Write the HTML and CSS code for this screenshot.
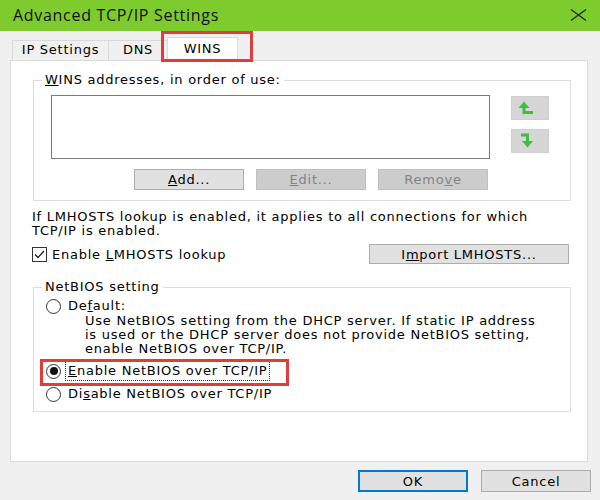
FILE: index.html
```html
<!DOCTYPE html>
<html lang="en">
<head>
    <meta charset="UTF-8">
    <title>Advanced TCP/IP Settings</title>
    <link rel="stylesheet" href="styles.css">
</head>
<body>
    <div class="window">
        <div class="titlebar">
            <span class="title">Advanced TCP/IP Settings</span>
            <svg class="close" width="17" height="12" viewBox="0 0 17 12">
                <path d="M1 0.5 L16 11.5 M16 0.5 L1 11.5" stroke="#1b2a10" stroke-width="1.3" fill="none"/>
            </svg>
        </div>

        <div class="tabs">
            <div class="tab tab-ip">IP Settings</div>
            <div class="tab tab-dns">DNS</div>
            <div class="tab tab-wins active">WINS</div>
            <div class="mark mark-tab"></div>
        </div>

        <div class="panel">
            <fieldset class="group wins">
                <legend><u>W</u>INS addresses, in order of use:</legend>
                <div class="wins-body">
                    <div class="list-col">
                        <div class="listbox"></div>
                        <div class="list-buttons">
                            <button class="btn"><u>A</u>dd...</button>
                            <button class="btn" disabled><u>E</u>dit...</button>
                            <button class="btn" disabled>Remo<u>v</u>e</button>
                        </div>
                    </div>
                    <div class="order-buttons">
                        <button class="btn arrow">
                            <svg width="38" height="24" viewBox="0 0 38 24">
                                <polygon points="7.5,12 18.5,12 13,5.5" fill="#3fbf3f"/>
                                <path d="M13 11 V16.5 H22" stroke="#3fbf3f" stroke-width="3" fill="none"/>
                            </svg>
                        </button>
                        <button class="btn arrow">
                            <svg width="38" height="24" viewBox="0 0 38 24">
                                <path d="M10 6 H16.5 V13" stroke="#3fbf3f" stroke-width="3" fill="none"/>
                                <polygon points="11,12 22,12 16.5,18.5" fill="#3fbf3f"/>
                            </svg>
                        </button>
                    </div>
                </div>
            </fieldset>

            <p class="note">If LMHOSTS lookup is enabled, it applies to all connections for which<br>TCP/IP is enabled.</p>

            <div class="lmhosts-row">
                <label class="check">
                    <span class="checkbox">
                        <svg width="13" height="13" viewBox="0 0 13 13">
                            <path d="M2 6.5 L5 9.5 L11 3" stroke="#222" stroke-width="1.3" fill="none"/>
                        </svg>
                    </span>
                    <span>Enable <u>L</u>MHOSTS lookup</span>
                </label>
                <button class="btn import">I<u>m</u>port LMHOSTS...</button>
            </div>

            <fieldset class="group netbios">
                <legend>NetBIOS setting</legend>
                <div class="netbios-body">
                    <div class="option">
                        <span class="radio"></span>
                        <span>De<u>f</u>ault:</span>
                    </div>
                    <p class="option-desc">Use NetBIOS setting from the DHCP server. If static IP address<br>is used or the DHCP server does not provide NetBIOS setting,<br>enable NetBIOS over TCP/IP.</p>
                    <div class="option option-enable">
                        <span class="radio checked"></span>
                        <span class="focus"><u>E</u>nable NetBIOS over TCP/IP</span>
                        <div class="mark mark-option"></div>
                    </div>
                    <div class="option option-disable">
                        <span class="radio"></span>
                        <span>Di<u>s</u>able NetBIOS over TCP/IP</span>
                    </div>
                </div>
            </fieldset>
        </div>

        <div class="footer">
            <button class="btn dialog default">OK</button>
            <button class="btn dialog">Cancel</button>
        </div>
    </div>
</body>
</html>
```

FILE: styles.css
```css
body {
    margin: 0;
    background: #f0f0f0;
    font-family: "DejaVu Sans", sans-serif;
    font-size: 13px;
    letter-spacing: 0.75px;
    color: #000;
}

.window {
    width: 600px;
    height: 500px;
    overflow: hidden;
}

.titlebar {
    height: 31px;
    background: #7ecb2e;
    display: flex;
    align-items: center;
    justify-content: space-between;
    padding: 0 13px;
}

.title {
    font-family: "Open Sans", sans-serif;
    font-size: 16px;
    letter-spacing: 0.7px;
    color: #111;
    margin-top: -1px;
}

.close {
    margin-top: -2px;
}

/* tabs */
.tabs {
    position: relative;
    height: 29px;
    display: flex;
    align-items: flex-end;
    padding-left: 12px;
}

.tab {
    height: 20px;
    line-height: 18px;
    box-sizing: border-box;
    border: 1px solid #d9d9d9;
    border-bottom: none;
    background: #f0f0f0;
    text-align: center;
    margin-right: -1px;
}

.tab-ip { width: 97px; }
.tab-dns { width: 60px; }

.tab.active {
    width: 71px;
    height: 24px;
    line-height: 22px;
    background: #fff;
    margin-bottom: -1px;
    position: relative;
    z-index: 1;
}

.mark {
    position: absolute;
    border: 3px solid #e23b3b;
    box-sizing: border-box;
    z-index: 2;
}

.mark-tab {
    left: 161px;
    top: 0;
    width: 92px;
    height: 31px;
}

/* tab page */
.panel {
    margin-left: 10px;
    width: 578px;
    height: 402px;
    box-sizing: border-box;
    border: 1px solid #d9d9d9;
    background: #fff;
    overflow: hidden;
}

.group {
    width: 538px;
    box-sizing: border-box;
    margin: 0 0 0 22px;
    padding: 0;
    border: 1px solid #dcdcdc;
}

.group legend {
    margin-left: 8px;
    padding: 0 3px;
    line-height: 16px;
}

.wins {
    margin-top: 11px;
}

.wins-body {
    display: flex;
    gap: 21px;
    padding: 7px 0 10px 17px;
}

.listbox {
    width: 439px;
    height: 64px;
    box-sizing: border-box;
    border: 1px solid #7a7a7a;
    background: #fff;
}

.list-buttons {
    display: flex;
    justify-content: flex-end;
    gap: 12px;
    margin-top: 10px;
    padding-right: 2px;
}

.btn {
    font-family: inherit;
    font-size: 13px;
    letter-spacing: 0.75px;
    color: #000;
    background: #e1e1e1;
    border: 1px solid #adadad;
    padding: 0;
    margin: 0;
    box-sizing: border-box;
}

.btn:disabled {
    background: #cccccc;
    border-color: #bfbfbf;
    color: #838383;
}

.list-buttons .btn {
    width: 110px;
    height: 21px;
}

.order-buttons {
    display: flex;
    flex-direction: column;
    gap: 9px;
    margin-top: 1px;
}

.arrow {
    width: 38px;
    height: 24px;
    background: #d6d6d6;
    border-color: #cfcfcf;
}

.arrow svg {
    display: block;
    margin: -1px;
}

.note {
    margin: 9px 0 0 21px;
    line-height: 14px;
    white-space: nowrap;
}

.lmhosts-row {
    display: flex;
    justify-content: space-between;
    align-items: center;
    margin: 6px 18px 0 21px;
    height: 20px;
}

.check {
    display: flex;
    align-items: center;
    gap: 5px;
}

.checkbox {
    width: 15px;
    height: 15px;
    box-sizing: border-box;
    border: 1px solid #333;
    background: #fff;
}

.checkbox svg {
    display: block;
}

.import {
    width: 200px;
    height: 20px;
}

/* netbios group */
.netbios {
    margin-top: 15px;
}

.netbios-body {
    padding: 0 0 10px 12px;
}

.option {
    display: flex;
    align-items: center;
    gap: 7px;
    height: 14px;
    line-height: 14px;
    margin-top: 4px;
}

.radio {
    width: 15px;
    height: 15px;
    box-sizing: border-box;
    border: 1px solid #333;
    border-radius: 50%;
    background: #fff;
    display: flex;
    align-items: center;
    justify-content: center;
}

.radio.checked::after {
    content: "";
    width: 8px;
    height: 8px;
    border-radius: 50%;
    background: #111;
}

.option-desc {
    margin: 1px 0 0 39px;
    line-height: 14px;
    white-space: nowrap;
}

.option-enable {
    position: relative;
    margin-top: 8px;
}

.focus {
    outline: 1px dotted #333;
    outline-offset: 2px;
}

.mark-option {
    left: -6px;
    top: -5px;
    width: 249px;
    height: 27px;
}

.option-disable {
    margin-top: 9px;
}

/* dialog buttons */
.footer {
    display: flex;
    justify-content: flex-end;
    gap: 13px;
    padding: 8px 9px 0 0;
}

.dialog {
    width: 110px;
    height: 22px;
    font-size: 13px;
}

.dialog.default {
    border: 2px solid #0078d7;
}
```
